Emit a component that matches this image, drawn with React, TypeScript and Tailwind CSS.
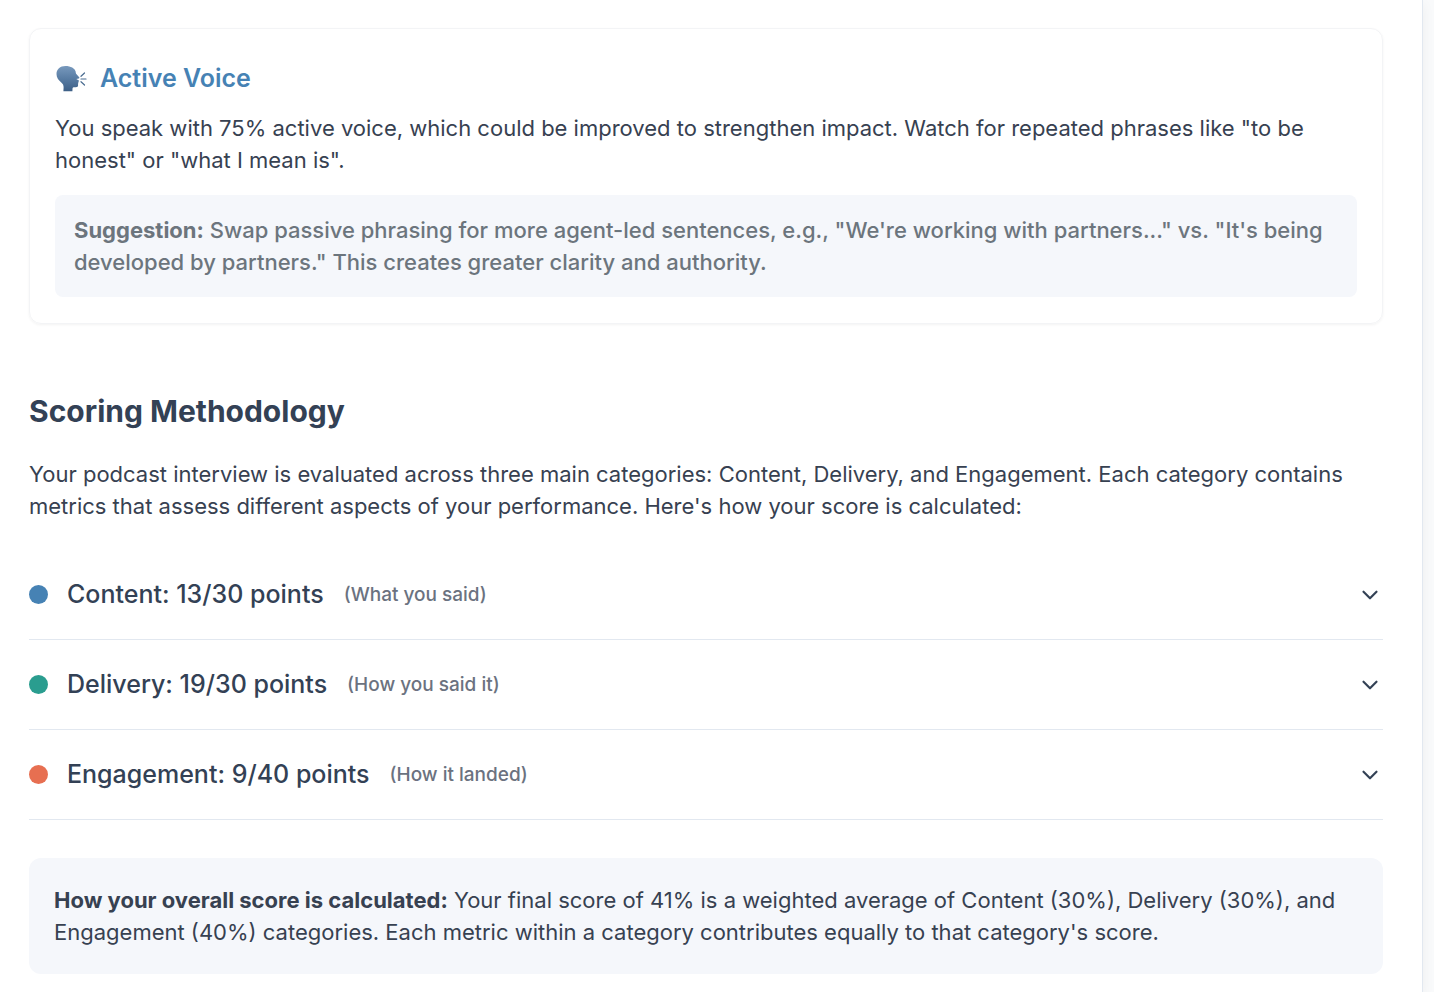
import { useState } from "react";
import { ChevronDown } from "lucide-react";

const categories = [
  {
    name: "Content",
    points: "13/30",
    hint: "(What you said)",
    dot: "bg-[#4682b4]",
    details: "Clarity, structure and relevance of your message.",
  },
  {
    name: "Delivery",
    points: "19/30",
    hint: "(How you said it)",
    dot: "bg-[#2a9d8f]",
    details: "Pace, tone and use of active voice.",
  },
  {
    name: "Engagement",
    points: "9/40",
    hint: "(How it landed)",
    dot: "bg-[#e76f51]",
    details: "How well you held the attention of the audience.",
  },
];

function SpeakingHead() {
  return (
    <svg viewBox="0 0 32 28" className="h-7 w-8 shrink-0" aria-hidden="true">
      <defs>
        <linearGradient id="head" x1="0" y1="0" x2="0" y2="1">
          <stop offset="0" stopColor="#7899bd" />
          <stop offset="0.5" stopColor="#587ca3" />
          <stop offset="1" stopColor="#3d5f86" />
        </linearGradient>
      </defs>
      <path
        fill="url(#head)"
        d="M10.500 2C5 2 1.500 5.300 1.500 10c0 3.600 2 6.200 4.500 8.200 1.900 1.500 2.700 3 2.600 5.200l-.2 3.900h9l.1-2.600c.1-1 .7-1.400 1.700-1.400h1.600c1.500 0 2.400-.8 2.300-2.200l-.1-1.500.6-.7-.5-.9.9-.7c.2-.4-.1-.8-.5-1l-2.200-1.200 2.500-.7c.6-.2.7-.6.4-1.100l-3.100-3.500c-.4-.6-.3-1.200-.4-2C19.800 4.200 15.800 2 10.500 2z"
      />
      <g stroke="#496b90" strokeWidth="1.2" strokeLinecap="round">
        <path d="M26 12.300l3.500-3.300" />
        <path d="M26 15h5" />
        <path d="M26 17.700l3.500 3.300" />
      </g>
    </svg>
  );
}

export default function App() {
  const [open, setOpen] = useState<string | null>(null);

  return (
    <div className="min-h-screen bg-[#f9fafb] pr-[11px] font-[Inter,sans-serif] text-[22px] leading-8 text-[#374151]">
      <main className="min-h-screen border-r border-[#e2e8f0] bg-white pt-7 pr-[39px] pb-[19px] pl-[29px] shadow-[0_4px_12px_rgba(0,0,0,0.05)]">
        <section className="rounded-xl border border-[#f3f4f6] px-[25px] py-[26px] shadow-[0_1px_3px_rgba(0,0,0,0.05)]">
          <h3 className="mb-[11px] flex items-center gap-[13px] text-[25px] leading-[46px] font-semibold text-[#4682b4]">
            <SpeakingHead />
            Active Voice
          </h3>
          <p>
            You speak with 75% active voice, which could be improved to
            strengthen impact. Watch for repeated phrases like "to be honest" or
            "what I mean is".
          </p>
          <p className="mt-[19px] rounded-lg bg-[#f5f7fb] p-[19px] font-medium text-[#6c757d]">
            <strong className="font-bold">Suggestion:</strong> Swap passive
            phrasing for more agent-led sentences, e.g., "We're working with
            partners..." vs. "It's being developed by partners." This creates
            greater clarity and authority.
          </p>
        </section>

        <h2 className="mt-[67px] mb-[27px] text-[30px] leading-10 font-bold text-[#334155]">
          Scoring Methodology
        </h2>
        <p className="mb-7">
          Your podcast interview is evaluated across three main categories:
          Content, Delivery, and Engagement. Each category contains metrics that
          assess different aspects of your performance. Here's how your score is
          calculated:
        </p>

        <div>
          {categories.map((category) => (
            <div key={category.name} className="border-b border-[#e2e8f0]">
              <button
                type="button"
                aria-expanded={open === category.name}
                onClick={() =>
                  setOpen(open === category.name ? null : category.name)
                }
                className="flex w-full items-center py-7 text-left leading-[33px]"
              >
                <span
                  className={`mr-[19px] size-[19px] shrink-0 rounded-full ${category.dot}`}
                />
                <span className="mr-5 text-[25px] font-medium text-[#334155]">
                  {category.name}: {category.points} points
                </span>
                <span className="text-[19px] font-medium text-[#6b7280]">
                  {category.hint}
                </span>
                <ChevronDown
                  className="ml-auto size-[26px] text-[#334155]"
                  strokeWidth={2}
                />
              </button>
              {open === category.name && (
                <p className="pb-7 pl-[38px]">{category.details}</p>
              )}
            </div>
          ))}
        </div>

        <p className="mt-[38px] rounded-xl bg-[#f5f7fb] px-[25px] py-[26px]">
          <strong className="font-bold">
            How your overall score is calculated:
          </strong>{" "}
          Your final score of 41% is a weighted average of Content (30%),
          Delivery (30%), and Engagement (40%) categories. Each metric within a
          category contributes equally to that category's score.
        </p>
      </main>
    </div>
  );
}
